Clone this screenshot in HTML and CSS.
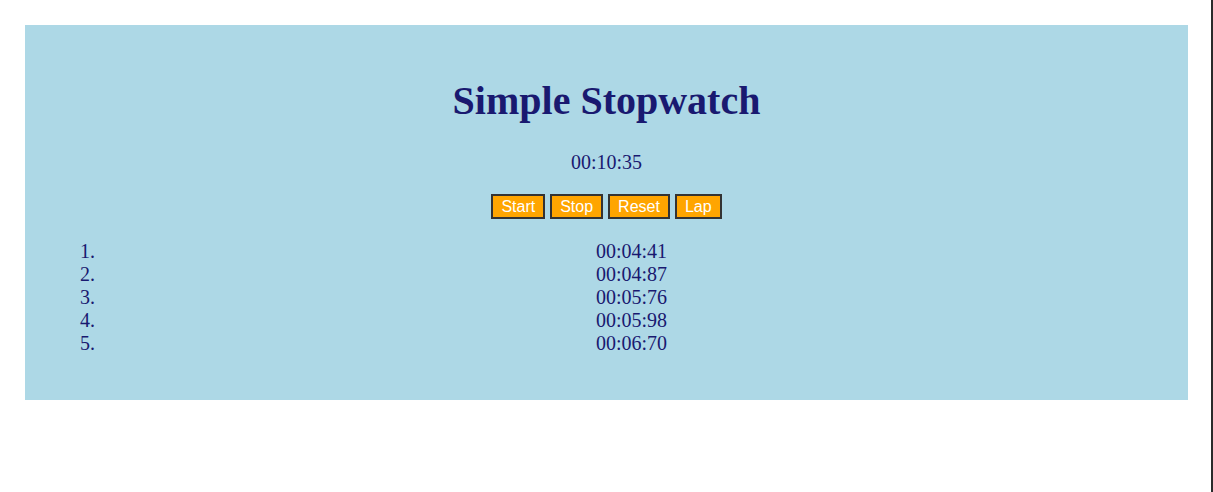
FILE: index.html
```html
<!DOCTYPE html>
<html>
<head>
<meta charset="utf-8">
<title>Simple Stopwatch</title>
<link rel="stylesheet" href="styles.css">
</head>
<body>
<div class="panel">
  <h1 class="title">Simple Stopwatch</h1>
  <p class="time">00:10:35</p>
  <div class="controls">
    <button class="btn">Start</button>
    <button class="btn">Stop</button>
    <button class="btn">Reset</button>
    <button class="btn">Lap</button>
  </div>
  <ol class="laps">
    <li>00:04:41</li>
    <li>00:04:87</li>
    <li>00:05:76</li>
    <li>00:05:98</li>
    <li>00:06:70</li>
  </ol>
</div>
</body>
</html>
```
FILE: styles.css
```css
html {
  border-right: 2px solid #2b2b2b;
  min-height: 100%;
  background: #ffffff;
}
body {
  margin: 0;
  font-family: "Liberation Serif", "Times New Roman", serif;
  font-size: 20px;
  color: #191970;
}
.panel {
  margin: 25px 23px 0 25px;
  padding: 25px 25px;
  background: #add8e6;
}
.title {
  margin: 28px 0 27px;
  font-size: 40px;
  line-height: 46px;
  font-weight: bold;
  text-align: center;
}
.time {
  margin: 0 0 20px;
  line-height: 23px;
  text-align: center;
}
.controls {
  display: flex;
  justify-content: center;
  gap: 5px;
  margin: 0;
}
.btn {
  box-sizing: border-box;
  height: 25px;
  margin: 0;
  padding: 0 8px;
  border: 2px solid #333333;
  background: #ffa500;
  color: #ffffff;
  font-family: "Liberation Sans", Arial, sans-serif;
  font-size: 16px;
  line-height: 19px;
}
.laps {
  margin: 21px 0 20px 10px;
  padding-left: 40px;
  line-height: 23px;
}
.laps li {
  text-align: center;
}
```
